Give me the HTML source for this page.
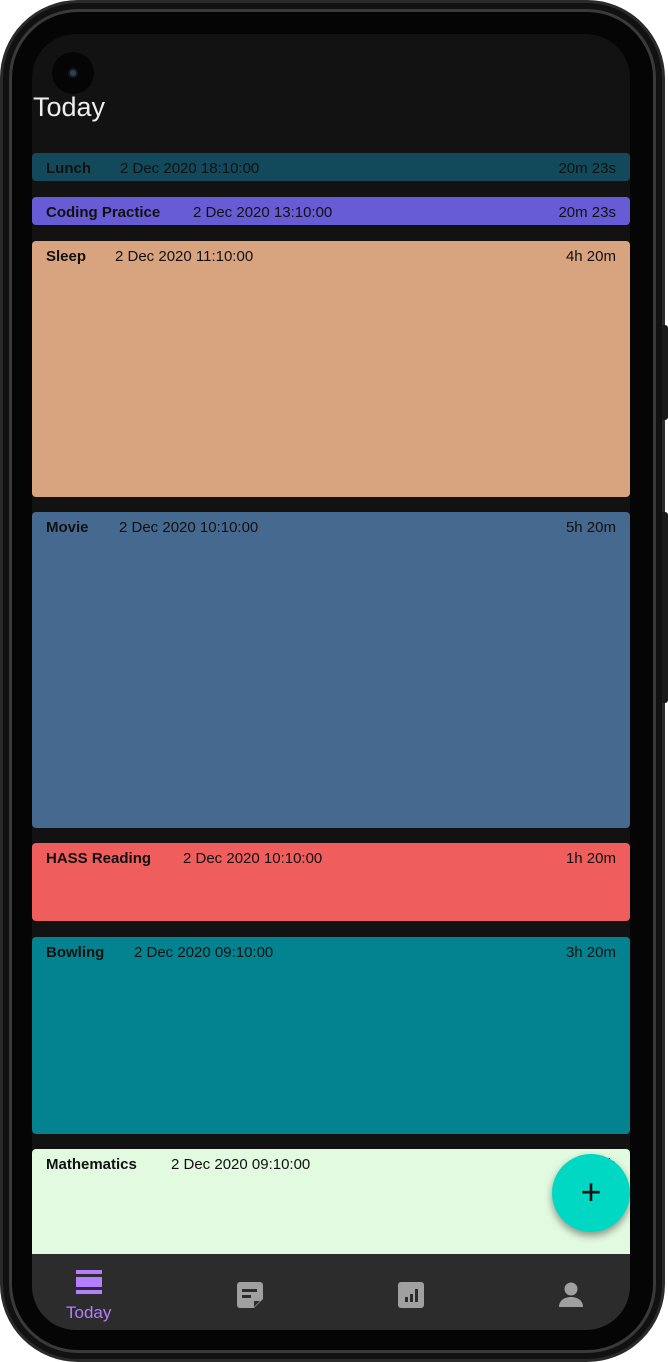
<!DOCTYPE html>
<html><head><style>
*{margin:0;padding:0;box-sizing:border-box}
body{width:668px;height:1362px;background:#fff;position:relative;overflow:hidden;font-family:"Liberation Sans",sans-serif}
.phone{position:absolute;left:0;top:0;width:665px;height:1362px;border-radius:78px;background:#050505;border:3px solid #2a2a2a;box-shadow:inset 0 0 0 6px #111,inset 0 0 0 9px #3a3a3a}
.btn{position:absolute;right:0;width:6px;background:#1a1a1a;border-radius:0 3px 3px 0}
.screen{position:absolute;left:32px;top:34px;width:598px;height:1296px;border-radius:44px;background:#121212;overflow:hidden}
.cam{position:absolute;left:20px;top:18px;width:42px;height:42px;border-radius:50%;background:#050505}
.cam i{position:absolute;left:16px;top:16px;width:10px;height:10px;border-radius:50%;background:#34404e;border:2px solid #151a20}
h1{position:absolute;left:1px;top:58px;color:#eee;font-size:27px;font-weight:normal}
.c{position:absolute;left:0;width:598px;border-radius:4px;font-size:15px;color:#111}
.c b{position:absolute;left:14px;top:7px;font-size:15px}
.c span{position:absolute;top:7px}
.c em{position:absolute;right:14px;top:7px;font-style:normal}
.nav{position:absolute;left:0;top:1220px;width:598px;height:76px;background:#2c2c2c}
.fab{position:absolute;left:520px;top:1120px;width:78px;height:78px;border-radius:50%;background:#00d8c4;box-shadow:0 4px 8px rgba(0,0,0,.4);color:#111;font-size:36px;text-align:center;line-height:76px}
</style></head><body>
<div class="phone"></div>
<div class="btn" style="top:325px;height:95px"></div>
<div class="btn" style="top:512px;height:191px"></div>
<div class="screen">
<div class="cam"><i></i></div>
<h1>Today</h1>
<div class="c" style="top:119px;height:28px;background:#124a5c"><b>Lunch</b><span style="left:88px">2 Dec 2020 18:10:00</span><em>20m 23s</em></div>
<div class="c" style="top:163px;height:28px;background:#675cd6"><b>Coding Practice</b><span style="left:161px">2 Dec 2020 13:10:00</span><em>20m 23s</em></div>
<div class="c" style="top:207px;height:256px;background:#d8a47f"><b>Sleep</b><span style="left:83px">2 Dec 2020 11:10:00</span><em>4h 20m</em></div>
<div class="c" style="top:478px;height:316px;background:#46698f"><b>Movie</b><span style="left:87px">2 Dec 2020 10:10:00</span><em>5h 20m</em></div>
<div class="c" style="top:809px;height:78px;background:#ef5d5d"><b>HASS Reading</b><span style="left:151px">2 Dec 2020 10:10:00</span><em>1h 20m</em></div>
<div class="c" style="top:903px;height:197px;background:#038290"><b>Bowling</b><span style="left:102px">2 Dec 2020 09:10:00</span><em>3h 20m</em></div>
<div class="c" style="top:1115px;height:110px;background:#e2fbe0;border-radius:4px 4px 0 0"><b>Mathematics</b><span style="left:139px">2 Dec 2020 09:10:00</span><em>2h</em></div>
<div class="nav">
<svg style="position:absolute;left:43px;top:16px" width="28" height="26" viewBox="0 0 28 26"><rect x="1" y="0" width="26" height="4" fill="#b57eff"/><rect x="1" y="7" width="26" height="10" fill="#b57eff"/><rect x="1" y="20" width="26" height="4" fill="#b57eff"/></svg>
<div style="position:absolute;left:34px;top:49px;color:#b57eff;font-size:17px">Today</div>
<svg style="position:absolute;left:205px;top:28px" width="26" height="26" viewBox="0 0 26 26"><path d="M3 0h20a3 3 0 0 1 3 3v14l-9 9H3a3 3 0 0 1-3-3V3a3 3 0 0 1 3-3z" fill="#a0a0a0"/><rect x="5" y="7" width="15" height="3" fill="#2c2c2c"/><rect x="5" y="13" width="9" height="3" fill="#2c2c2c"/><path d="M17 25v-6h6z" fill="#2c2c2c"/></svg>
<svg style="position:absolute;left:366px;top:28px" width="26" height="26" viewBox="0 0 26 26"><rect width="26" height="26" rx="3" fill="#a0a0a0"/><rect x="7" y="15" width="3" height="5" fill="#2c2c2c"/><rect x="12" y="12" width="3" height="8" fill="#2c2c2c"/><rect x="17" y="7" width="3" height="13" fill="#2c2c2c"/></svg>
<svg style="position:absolute;left:526px;top:27px" width="26" height="26" viewBox="0 0 26 26"><circle cx="13" cy="8" r="6.5" fill="#a0a0a0"/><path d="M1 26c0-7 6-10 12-10s12 3 12 10z" fill="#a0a0a0"/></svg>
</div>
<div class="fab">+</div>
</div>
</body></html>
